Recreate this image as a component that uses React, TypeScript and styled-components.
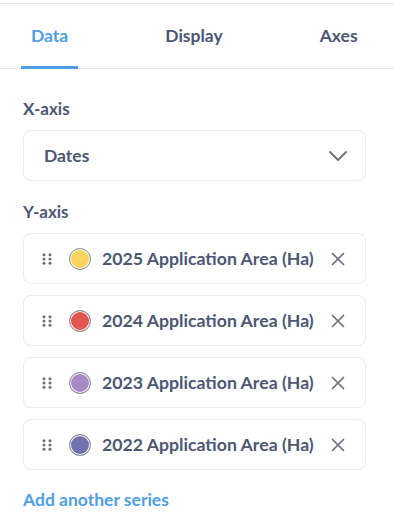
import React from "react";
import styled, { createGlobalStyle } from "styled-components";

const Global = createGlobalStyle`
  html, body { margin: 0; padding: 0; background: #fff; }
  body { font-family: Lato, "Noto Sans", sans-serif; color: #4C5773; }
`;

const Page = styled.div`
  width: 394px;
  height: 523px;
  overflow: hidden;
  padding-top: 3px;
  box-sizing: border-box;
`;

const Tabs = styled.div`
  border-top: 1px solid #e9e9eb;
  border-bottom: 1px solid #e9e9eb;
  display: flex;
  gap: 77px;
  height: 66px;
  padding-left: 21px;
  box-sizing: border-box;
`;

const Tab = styled.div<{ $active?: boolean }>`
  padding: 1px 10px 0;
  display: flex;
  align-items: center;
  font-size: 17.5px;
  font-weight: 700;
  color: ${(p) => (p.$active ? "#509EE3" : "#4C5773")};
  border-bottom: 3px solid ${(p) => (p.$active ? "#509EE3" : "transparent")};
  margin-bottom: -1px;
`;

const Body = styled.div`
  padding: 29px 28px 0 23px;
  display: flex;
  flex-direction: column;
`;

const Label = styled.div`
  font-size: 17px;
  font-weight: 700;
  line-height: 22px;
  margin-bottom: 10px;
`;

const Box = styled.div`
  height: 51px;
  border: 1px solid #eaeaec;
  border-radius: 8px;
  box-sizing: border-box;
  display: flex;
  align-items: center;
`;

const Select = styled(Box)`
  padding: 0 18px 0 20px;
  justify-content: space-between;
  font-size: 17.5px;
  font-weight: 700;
  margin-bottom: 20px;
`;

const SeriesList = styled.div`
  display: flex;
  flex-direction: column;
  gap: 11px;
`;

const SeriesRow = styled(Box)`
  padding: 0 20px 0 18px;
  font-size: 17.7px;
  font-weight: 700;
`;

const Handle = styled.svg`
  width: 10px;
  height: 12px;
  margin-right: 17px;
  flex: none;
`;

const Swatch = styled.span<{ $c: string }>`
  width: 22px;
  height: 22px;
  border-radius: 50%;
  box-sizing: border-box;
  border: 1px solid #8a8f9c;
  background: ${(p) => p.$c};
  box-shadow: inset 0 0 0 1px #fff;
  margin-right: 11px;
  flex: none;
`;

const SeriesName = styled.span`
  flex: 1;
  white-space: nowrap;
`;

const Close = styled.svg`
  width: 14px;
  height: 14px;
  flex: none;
`;

const AddLink = styled.div`
  margin-top: 19px;
  color: #509EE3;
  font-size: 17.5px;
  font-weight: 700;
`;

const series = [
  { name: "2025 Application Area (Ha)", color: "#F9D45C" },
  { name: "2024 Application Area (Ha)", color: "#E25552" },
  { name: "2023 Application Area (Ha)", color: "#A989C5" },
  { name: "2022 Application Area (Ha)", color: "#7172AD" },
];

export default function App() {
  return (
    <Page>
      <Global />
      <Tabs>
        <Tab $active>Data</Tab>
        <Tab>Display</Tab>
        <Tab>Axes</Tab>
      </Tabs>
      <Body>
        <Label>X-axis</Label>
        <Select>
          <span>Dates</span>
          <svg width="18" height="10" viewBox="0 0 18 10" fill="none">
            <path d="M1 1l8 8 8-8" stroke="#696E7B" strokeWidth="1.8" strokeLinecap="round" strokeLinejoin="round" />
          </svg>
        </Select>
        <Label>Y-axis</Label>
        <SeriesList>
          {series.map((s) => (
            <SeriesRow key={s.name}>
              <Handle viewBox="0 0 10 12">
                {[0, 1].map((c) =>
                  [0, 1, 2].map((r) => (
                    <circle key={`${c}${r}`} cx={2 + c * 6} cy={1.7 + r * 4.3} r={1.5} fill="#696E7B" />
                  ))
                )}
              </Handle>
              <Swatch $c={s.color} />
              <SeriesName>{s.name}</SeriesName>
              <Close viewBox="0 0 14 14">
                <path d="M1.5 1.5l11 11M12.5 1.5l-11 11" stroke="#696E7B" strokeWidth="1.7" strokeLinecap="round" />
              </Close>
            </SeriesRow>
          ))}
        </SeriesList>
        <AddLink>Add another series</AddLink>
      </Body>
    </Page>
  );
}
